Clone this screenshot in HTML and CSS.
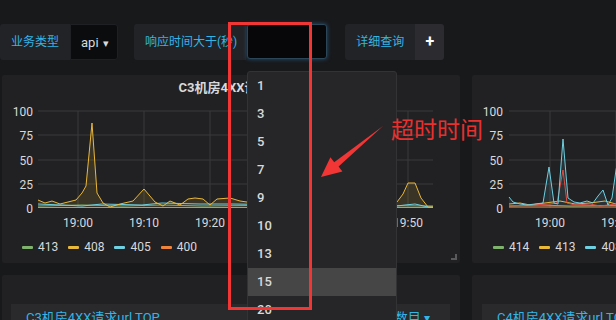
FILE: index.html
```html
<!DOCTYPE html>
<html lang="zh-CN">
<head>
    <meta charset="UTF-8">
    <meta name="viewport" content="width=device-width, initial-scale=1.0">
    <title>4XX Dashboard</title>
    <link rel="stylesheet" href="styles.css">
</head>
<body>
    <div class="toolbar">
        <div class="label first">业务类型</div>
        <div class="select">api <span class="caret">▾</span></div>
        <div class="label gap">响应时间大于(秒)</div>
        <div class="input"></div>
        <div class="label gap2">详细查询</div>
        <div class="plus">+</div>
    </div>

    <div class="row top-row">
        <div class="panel">
            <div class="panel-title">C3机房4XX请求数</div>
            <svg class="chart" width="458" height="136" viewBox="0 0 458 136">
                <g class="grid">
                    <line x1="36" y1="15" x2="431" y2="15"/>
                    <line x1="36" y1="39" x2="431" y2="39"/>
                    <line x1="36" y1="64" x2="431" y2="64"/>
                    <line x1="36" y1="88" x2="431" y2="88"/>
                    <line x1="76" y1="15" x2="76" y2="112"/>
                    <line x1="142" y1="15" x2="142" y2="112"/>
                    <line x1="208" y1="15" x2="208" y2="112"/>
                    <line x1="274" y1="15" x2="274" y2="112"/>
                    <line x1="340" y1="15" x2="340" y2="112"/>
                    <line x1="406" y1="15" x2="406" y2="112"/>
                </g>
                <g class="ylabels">
                    <text x="31" y="19.5">100</text>
                    <text x="31" y="43.5">75</text>
                    <text x="31" y="68.5">50</text>
                    <text x="31" y="92.5">25</text>
                    <text x="31" y="116.5">0</text>
                </g>
                <g class="xlabels">
                    <text x="76" y="130.5">19:00</text>
                    <text x="142" y="130.5">19:10</text>
                    <text x="208" y="130.5">19:20</text>
                    <text x="274" y="130.5">19:30</text>
                    <text x="340" y="130.5">19:40</text>
                    <text x="406" y="130.5">19:50</text>
                </g>
                <polygon fill="rgba(234,184,57,0.13)" points="36,104 43,107 50,105 58,108 66,106 74,104 80,97 84,90 90,27 95,97 101,107 108,111 118,108 131,105 142,93 153,106 161,110 168,105 178,109 186,103 193,102 201,103 208,109 215,103 228,102 238,105 245,106 270,104 300,106 330,103 360,105 385,104 395,106 401,98 406,87 413,87 419,102 426,111 431,111 431,112 36,112"/>
                <polyline class="s-orange" points="36,111.5 431,111.5"/>
                <polyline class="s-green" points="36,110 80,109 120,110 160,109 200,110 300,109 431,110"/>
                <polyline class="s-cyan" points="36,108 60,109 80,110 100,108 140,109 160,107 198,108 230,108 300,109 395,110 403,109 413,108 426,111 431,111"/>
                <polyline class="s-yellow" points="36,104 43,107 50,105 58,108 66,106 74,104 80,97 84,90 90,27 95,97 101,107 108,111 118,108 131,105 142,93 153,106 161,110 168,105 178,109 186,103 193,102 201,103 208,109 215,103 228,102 238,105 245,106 270,104 300,106 330,103 360,105 385,104 395,106 401,98 406,87 413,87 419,102 426,111 431,111"/>
            </svg>
            <div class="legend">
                <span class="item"><i class="green"></i>413</span>
                <span class="item"><i class="yellow"></i>408</span>
                <span class="item"><i class="cyan"></i>405</span>
                <span class="item"><i class="orange"></i>400</span>
            </div>
            <span class="resize"></span>
        </div>

        <div class="panel">
            <div class="panel-title">C4机房4XX请求数</div>
            <svg class="chart" width="458" height="136" viewBox="0 0 458 136">
                <g class="grid">
                    <line x1="37" y1="15" x2="432" y2="15"/>
                    <line x1="37" y1="39" x2="432" y2="39"/>
                    <line x1="37" y1="64" x2="432" y2="64"/>
                    <line x1="37" y1="88" x2="432" y2="88"/>
                    <line x1="78" y1="15" x2="78" y2="112"/>
                    <line x1="144" y1="15" x2="144" y2="112"/>
                    <line x1="210" y1="15" x2="210" y2="112"/>
                </g>
                <g class="ylabels">
                    <text x="31" y="19.5">100</text>
                    <text x="31" y="43.5">75</text>
                    <text x="31" y="68.5">50</text>
                    <text x="31" y="92.5">25</text>
                    <text x="31" y="116.5">0</text>
                </g>
                <g class="xlabels">
                    <text x="78" y="130.5">19:00</text>
                    <text x="144" y="130.5">19:10</text>
                    <text x="210" y="130.5">19:20</text>
                </g>
                <polygon fill="rgba(110,208,224,0.1)" points="37,101 41,106 48,108 55,109 63,108 71,107 77,71 82,107 86,108 91,43 96,102 102,106 108,107 115,105 121,107 126,100 131,94 136,109 140,102 144,74 148,54 154,104 170,108 170,112 37,112"/>
                <polyline class="s-orange" points="37,111 170,111"/>
                <polyline class="s-green" points="37,110 68,109 98,110 170,109"/>
                <polyline class="s-yellow" points="37,108 48,107 58,109 73,107 88,105 103,108 118,107 133,105 144,108 170,107"/>
                <polyline class="s-red" points="37,110 58,109 78,108 85,107 91,74 95,107 103,109 118,108 128,110 144,108 170,108"/>
                <polyline class="s-cyan" points="37,101 41,106 48,108 55,109 63,108 71,107 77,71 82,107 86,108 91,43 96,102 102,106 108,107 115,105 121,107 126,100 131,94 136,109 140,102 144,74 148,54 154,104 170,108"/>
            </svg>
            <div class="legend right">
                <span class="item"><i class="green"></i>414</span>
                <span class="item"><i class="yellow"></i>413</span>
                <span class="item"><i class="cyan"></i>408</span>
            </div>
        </div>
    </div>

    <div class="row bottom-row">
        <div class="panel table-panel">
            <div class="table-head">
                <span>C3机房4XX请求url TOP</span>
                <span>请求数目 <span class="tri">▾</span></span>
            </div>
        </div>
        <div class="panel table-panel">
            <div class="table-head">
                <span>C4机房4XX请求url TOP</span>
                <span>请求数目 <span class="tri">▾</span></span>
            </div>
        </div>
    </div>

    <ul class="dropdown">
        <li>1</li>
        <li>3</li>
        <li>5</li>
        <li>7</li>
        <li>9</li>
        <li>10</li>
        <li>13</li>
        <li class="active">15</li>
        <li>20</li>
    </ul>

    <!-- screenshot annotations -->
    <div class="mark-box"></div>
    <svg class="mark-arrow" width="70" height="60" viewBox="316 122 70 60">
        <polygon points="383,126 338.6,166.4 342.4,171.4 321,177 330.4,157.2 334.2,162.2"/>
    </svg>
    <div class="mark-text">超时时间</div>
</body>
</html>
```

FILE: styles.css
```css
body {
    margin: 0;
    width: 616px;
    height: 320px;
    overflow: hidden;
    background-color: #18191b;
    font-family: Roboto, "Noto Sans CJK SC", sans-serif;
    color: #d8d9da;
    position: relative;
}
.toolbar {
    display: flex;
    padding-top: 24px;
    height: 36px;
}
.label {
    height: 36px;
    line-height: 36px;
    padding: 0 11px;
    font-size: 12px;
    color: #33b5e5;
    background-color: #222327;
    border-radius: 3px 0 0 3px;
}
.label.gap {
    margin-left: 16px;
    padding-right: 9px;
}
.label.gap2 {
    margin-left: 18px;
    padding-right: 11px;
}
.select {
    width: 48px;
    box-sizing: border-box;
    height: 36px;
    line-height: 35px;
    padding-left: 10px;
    font-size: 13px;
    color: #d8d9da;
    background-color: #0b0c0e;
    border: 1px solid #1f2023;
    border-radius: 0 3px 3px 0;
}
.caret {
    font-size: 11px;
    margin-left: 1px;
}
.input {
    width: 80px;
    height: 35px;
    box-sizing: border-box;
    margin-left: 1px;
    background-color: #070709;
    border: 1px solid #2a4658;
    border-radius: 3px;
    box-shadow: 0 0 4px rgba(51, 130, 190, 0.55);
}
.plus {
    width: 29px;
    height: 36px;
    line-height: 35px;
    text-align: center;
    font-size: 16px;
    font-weight: bold;
    color: #fff;
    background-color: #2c2c30;
    border-radius: 0 3px 3px 0;
}
.row {
    display: flex;
    gap: 12px;
    padding-left: 2px;
}
.top-row {
    margin-top: 15px;
}
.bottom-row {
    margin-top: 12px;
}
.panel {
    width: 458px;
    background-color: #212124;
    border-radius: 2px;
    position: relative;
    flex-shrink: 0;
}
.top-row .panel {
    height: 188px;
}
.panel-title {
    padding-top: 5px;
    line-height: 16px;
    text-align: center;
    font-size: 13px;
    font-weight: bold;
    color: #d8d9da;
    white-space: nowrap;
    overflow: hidden;
}
.chart {
    display: block;
}
.grid line {
    stroke: #3a3a3d;
    stroke-width: 1;
}
.ylabels text {
    font-size: 12px;
    fill: #d8d9da;
    text-anchor: end;
}
.xlabels text {
    font-size: 12px;
    fill: #d8d9da;
    text-anchor: middle;
}
polyline {
    fill: none;
    stroke-width: 1;
}
.s-yellow { stroke: #eab839; }
.s-cyan { stroke: #6ed0e0; }
.s-green { stroke: #7eb26d; }
.s-orange { stroke: #ef843c; }
.s-red { stroke: #e24d42; }
.legend {
    display: flex;
    margin-top: 7px;
    padding-left: 20px;
    line-height: 16px;
    font-size: 12px;
    white-space: nowrap;
}
.legend.right {
    padding-left: 21px;
}
.legend .item {
    display: flex;
    align-items: center;
    margin-right: 10px;
}
.legend i {
    display: inline-block;
    width: 11px;
    height: 3px;
    margin-right: 5px;
    border-radius: 1px;
}
.legend i.green { background-color: #7eb26d; }
.legend i.yellow { background-color: #eab839; }
.legend i.cyan { background-color: #6ed0e0; }
.legend i.orange { background-color: #ef843c; }
.resize {
    position: absolute;
    right: 3px;
    bottom: 3px;
    width: 4px;
    height: 4px;
    border-right: 2px solid #5a5a5c;
    border-bottom: 2px solid #5a5a5c;
}
.table-panel {
    height: 60px;
    padding-top: 29px;
    box-sizing: border-box;
}
.table-head {
    display: flex;
    justify-content: space-between;
    margin: 0 10px 0 9px;
    height: 40px;
    padding: 3px 20px 0 15px;
    background-color: #2a2a2d;
    font-size: 13px;
    color: #33b5e5;
    white-space: nowrap;
    overflow: hidden;
}
.table-panel + .table-panel .table-head {
    margin-left: 10px;
}
.tri {
    font-size: 12px;
}
.dropdown {
    position: absolute;
    left: 247px;
    top: 71px;
    width: 150px;
    height: 260px;
    box-sizing: border-box;
    margin: 0;
    padding: 0;
    list-style: none;
    background-color: #262628;
    border: 1px solid #333336;
    border-radius: 3px;
    overflow: hidden;
}
.dropdown li {
    height: 28px;
    line-height: 28px;
    padding-left: 9px;
    font-size: 13px;
    font-weight: 500;
    color: #d8d9da;
}
.dropdown li.active {
    background-color: #464646;
}
.mark-box {
    position: absolute;
    left: 228px;
    top: 22px;
    width: 78px;
    height: 282px;
    border: 3px solid #f23535;
}
.mark-arrow {
    position: absolute;
    left: 316px;
    top: 122px;
}
.mark-arrow polygon {
    fill: #f23535;
}
.mark-text {
    position: absolute;
    left: 391px;
    top: 116px;
    font-size: 23px;
    line-height: 30px;
    color: #e8302f;
    font-family: "Liberation Serif", "Noto Sans CJK SC", serif;
}
```
